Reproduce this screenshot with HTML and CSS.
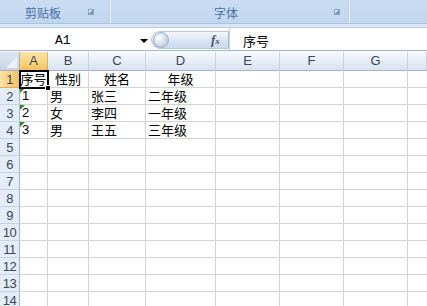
FILE: index.html
```html
<!DOCTYPE html>
<html>
<head>
<meta charset="utf-8">
<link rel="stylesheet" href="styles.css">
</head>
<body>
<div class="ribbon">
  <div class="group g1">
    <span class="glabel">剪贴板</span>
    <span class="launcher"></span>
  </div>
  <div class="sep"></div>
  <div class="group g2">
    <span class="glabel">字体</span>
    <span class="launcher"></span>
  </div>
  <div class="sep"></div>
  <div class="group g3"></div>
</div>
<div class="band"></div>
<div class="fbar">
  <div class="namebox"><span class="nametext">A1</span><span class="arrow"></span></div>
  <div class="fxbtn"><span class="knob"></span><span class="fx">f<small>x</small></span></div>
  <div class="finput">序号</div>
</div>
<div class="gap"></div>
<div class="grid">
  <div class="corner"><span class="tri"></span></div>
  <div class="ch sel">A</div><div class="ch">B</div><div class="ch">C</div><div class="ch">D</div><div class="ch">E</div><div class="ch">F</div><div class="ch">G</div><div class="ch last"></div>

  <div class="rh sel">1</div>
  <div class="c ctr active">序号<span class="handle"></span></div><div class="c ctr">性别</div><div class="c ctr">姓名</div><div class="c ctr">年级</div><div class="c"></div><div class="c"></div><div class="c"></div><div class="c last"></div>

  <div class="rh">2</div>
  <div class="c num"><span class="warn"></span>1</div><div class="c">男</div><div class="c">张三</div><div class="c">二年级</div><div class="c"></div><div class="c"></div><div class="c"></div><div class="c last"></div>

  <div class="rh">3</div>
  <div class="c num"><span class="warn"></span>2</div><div class="c">女</div><div class="c">李四</div><div class="c">一年级</div><div class="c"></div><div class="c"></div><div class="c"></div><div class="c last"></div>

  <div class="rh">4</div>
  <div class="c num"><span class="warn"></span>3</div><div class="c">男</div><div class="c">王五</div><div class="c">三年级</div><div class="c"></div><div class="c"></div><div class="c"></div><div class="c last"></div>

  <div class="rh">5</div><div class="c"></div><div class="c"></div><div class="c"></div><div class="c"></div><div class="c"></div><div class="c"></div><div class="c"></div><div class="c last"></div>
  <div class="rh">6</div><div class="c"></div><div class="c"></div><div class="c"></div><div class="c"></div><div class="c"></div><div class="c"></div><div class="c"></div><div class="c last"></div>
  <div class="rh">7</div><div class="c"></div><div class="c"></div><div class="c"></div><div class="c"></div><div class="c"></div><div class="c"></div><div class="c"></div><div class="c last"></div>
  <div class="rh">8</div><div class="c"></div><div class="c"></div><div class="c"></div><div class="c"></div><div class="c"></div><div class="c"></div><div class="c"></div><div class="c last"></div>
  <div class="rh">9</div><div class="c"></div><div class="c"></div><div class="c"></div><div class="c"></div><div class="c"></div><div class="c"></div><div class="c"></div><div class="c last"></div>
  <div class="rh">10</div><div class="c"></div><div class="c"></div><div class="c"></div><div class="c"></div><div class="c"></div><div class="c"></div><div class="c"></div><div class="c last"></div>
  <div class="rh">11</div><div class="c"></div><div class="c"></div><div class="c"></div><div class="c"></div><div class="c"></div><div class="c"></div><div class="c"></div><div class="c last"></div>
  <div class="rh">12</div><div class="c"></div><div class="c"></div><div class="c"></div><div class="c"></div><div class="c"></div><div class="c"></div><div class="c"></div><div class="c last"></div>
  <div class="rh">13</div><div class="c"></div><div class="c"></div><div class="c"></div><div class="c"></div><div class="c"></div><div class="c"></div><div class="c"></div><div class="c last"></div>
  <div class="rh">14</div><div class="c"></div><div class="c"></div><div class="c"></div><div class="c"></div><div class="c"></div><div class="c"></div><div class="c"></div><div class="c last"></div>
</div>
</body>
</html>
```

FILE: styles.css
```css
* { box-sizing: border-box; }
html, body { margin: 0; padding: 0; }
body {
  width: 427px;
  height: 306px;
  overflow: hidden;
  background: #ffffff;
  font-family: "Noto Sans CJK SC", "Liberation Sans", sans-serif;
}

.ribbon {
  display: flex;
  height: 24px;
  background: linear-gradient(#c9dcf2, #c1d6ee);
  border-bottom: 1px solid #a9c2e0;
}
.group {
  position: relative;
  display: flex;
  align-items: center;
  height: 100%;
  padding-top: 3px;
}
.g1 { width: 109px; }
.g2 { width: 236px; }
.g3 { flex: 1; }
.glabel {
  font-size: 12px;
  color: #4a6ea6;
  line-height: 1;
}
.g1 .glabel { margin-left: 25px; }
.g2 .glabel { margin-left: 102px; }
.launcher {
  position: absolute;
  top: 9px;
  width: 6px;
  height: 6px;
  border: 1px solid #8aa3c4;
  background: linear-gradient(135deg, #e6eef8 50%, #7e97b8 50%);
}
.g1 .launcher { left: 88px; }
.g2 .launcher { left: 222px; }
.sep {
  width: 3px;
  height: 100%;
  background: linear-gradient(90deg, #a9c0dc, #eef4fb, #b4c9e3);
}

.band {
  height: 4px;
  background: #dae6f5;
  border-bottom: 1px solid #b9cde6;
}

.fbar {
  display: flex;
  height: 22px;
  background: #ffffff;
}
.namebox {
  position: relative;
  width: 151px;
  display: flex;
  align-items: center;
  padding-top: 3px;
  background: #fff;
}
.nametext {
  margin-left: 55px;
  font-family: "Liberation Mono", monospace;
  font-size: 13px;
  color: #000;
}
.arrow {
  position: absolute;
  left: 140px;
  top: 11px;
  width: 0;
  height: 0;
  border-left: 4px solid transparent;
  border-right: 4px solid transparent;
  border-top: 4px solid #000;
}
.fxbtn {
  position: relative;
  width: 78px;
  margin: 3px 0 1px;
  border-radius: 10px 0 0 10px;
  background: linear-gradient(#f3f7fc, #dbe6f4 50%, #c9d9ee);
  border: 1px solid #b7c8de;
  border-right: 1px solid #a6b9d2;
}
.knob {
  position: absolute;
  left: 1px;
  top: 0px;
  width: 16px;
  height: 16px;
  border-radius: 50%;
  background: radial-gradient(circle at 35% 35%, #ffffff 0, #e1e8f1 35%, #a9b8ca 100%);
  border: 1px solid #9fb1c8;
}
.fx {
  position: absolute;
  left: 59px;
  top: 0px;
  font-family: "Liberation Serif", serif;
  font-style: italic;
  font-weight: bold;
  font-size: 13px;
  color: #4b5565;
}
.fx small { font-size: 9px; }
.finput {
  flex: 1;
  padding-left: 13px;
  padding-top: 2px;
  font-size: 13px;
  line-height: 22px;
  color: #000;
  border-left: 1px solid #c5d3e4;
}

.gap {
  height: 2px;
  background: #fff;
  border-top: 1px solid #9eb6ce;
}

.grid {
  display: grid;
  grid-template-columns: 20px 28px 41px 57px 70px 64px 64px 64px 1fr;
  grid-template-rows: 19px;
  grid-auto-rows: 17px;
}
.corner {
  position: relative;
  background: linear-gradient(#dfe6ef, #c8d3e1);
  border-right: 1px solid #9eb6ce;
  border-bottom: 1px solid #9eb6ce;
}
.tri {
  position: absolute;
  right: 2px;
  bottom: 2px;
  width: 0;
  height: 0;
  border-left: 11px solid transparent;
  border-bottom: 11px solid #eef2f7;
}
.ch {
  background: linear-gradient(#f7fafd, #e4ebf5 60%, #d9e3ef);
  border-right: 1px solid #c5d3e3;
  border-bottom: 1px solid #9eb6ce;
  font-family: "Liberation Sans", sans-serif;
  font-size: 13px;
  color: #3b4656;
  text-align: center;
  line-height: 18px;
}
.ch.sel {
  background: linear-gradient(#fbe3a8, #f8d37e 60%, #f3c25e);
  border-right-color: #e0b15a;
  border-bottom-color: #c89a3e;
}
.rh {
  background: #e4ecf7;
  border-right: 1px solid #9eb6ce;
  border-bottom: 1px solid #c5d3e3;
  font-family: "Liberation Sans", sans-serif;
  font-size: 13px;
  color: #3b4656;
  text-align: center;
  line-height: 17px;
  letter-spacing: -0.5px;
}
.rh.sel {
  background: linear-gradient(90deg, #fbe3a8, #f3c25e);
  border-bottom-color: #e0b15a;
}
.c {
  position: relative;
  border-right: 1px solid #d4d4d4;
  border-bottom: 1px solid #d4d4d4;
  font-size: 13px;
  line-height: 16px;
  color: #000;
  padding-left: 2px;
  white-space: nowrap;
}
.c.last { border-right: none; }
.c.ctr { text-align: center; padding-left: 0; }
.c.num { font-family: "Liberation Sans", sans-serif; padding-left: 2px; }
.c.active {
  outline: 2px solid #000;
  outline-offset: -1px;
  z-index: 2;
}
.handle {
  position: absolute;
  right: -4px;
  bottom: -4px;
  width: 6px;
  height: 6px;
  background: #000;
  border: 1px solid #fff;
}
.warn {
  position: absolute;
  left: 0;
  top: 0;
  width: 0;
  height: 0;
  border-top: 5px solid #2f8a2f;
  border-right: 5px solid transparent;
}
```
